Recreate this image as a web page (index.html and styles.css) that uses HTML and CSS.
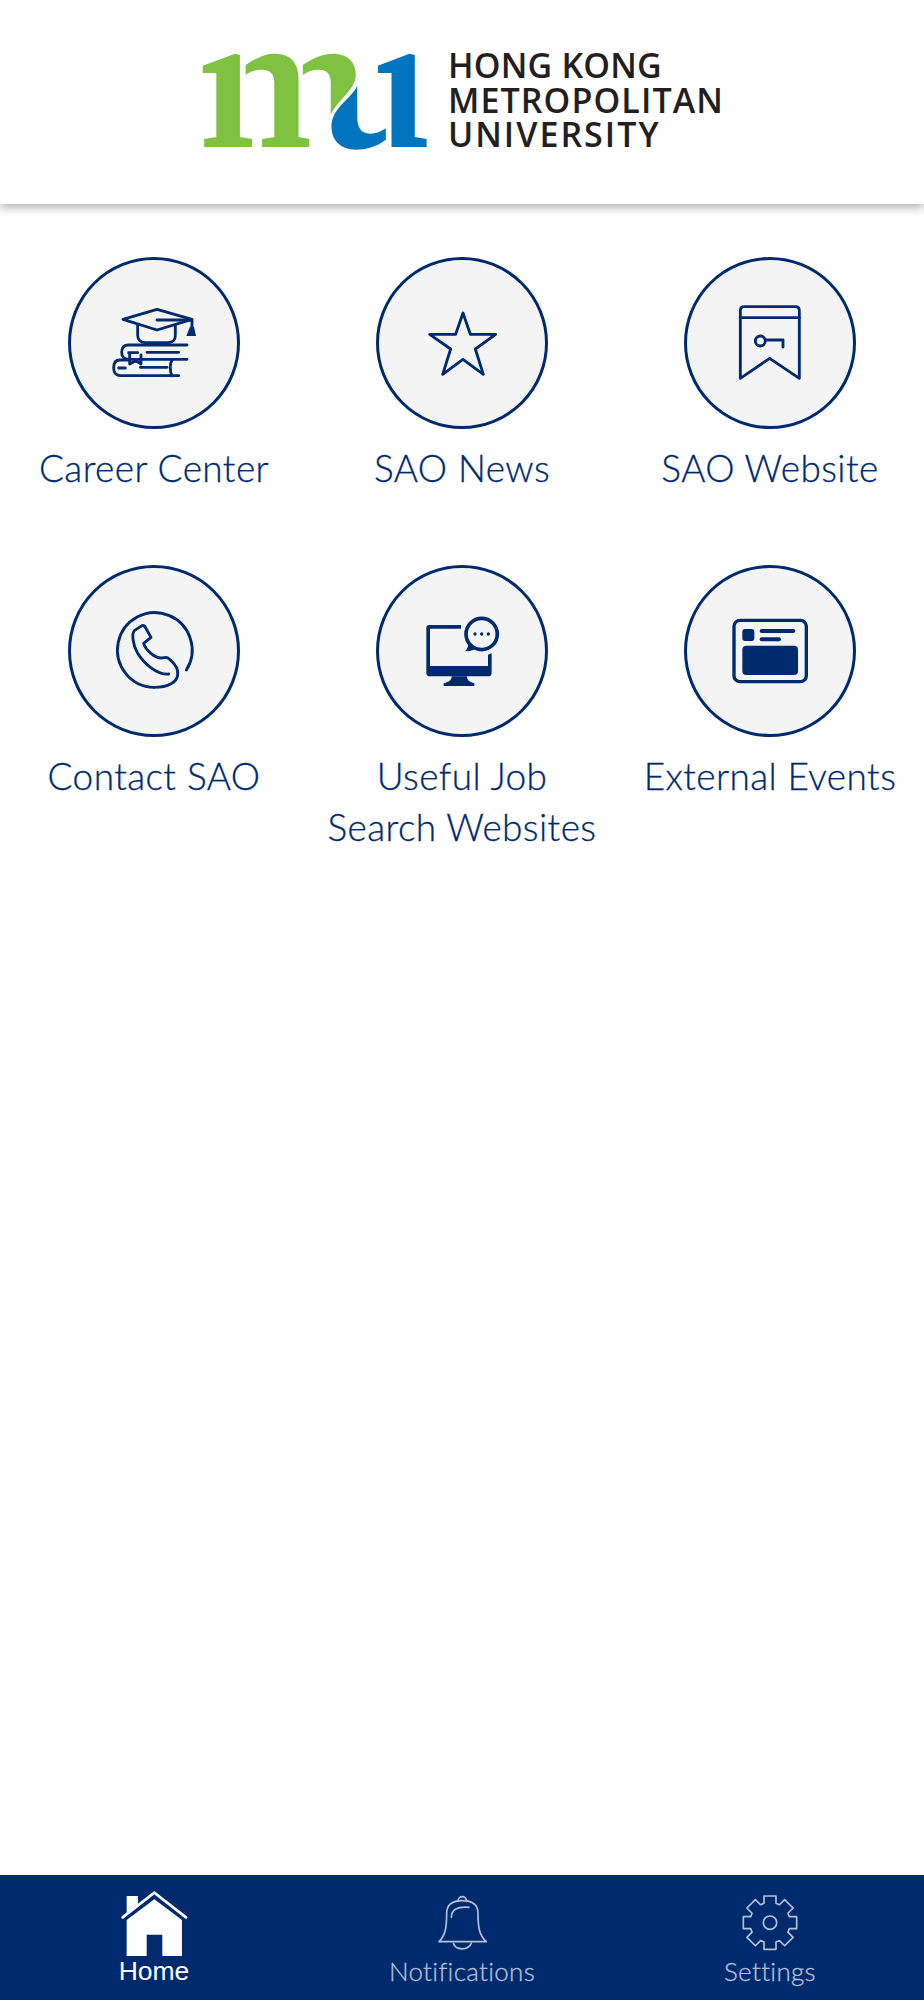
FILE: index.html
```html
<!DOCTYPE html>
<html lang="en">
<head>
<meta charset="utf-8">
<title>HKMU SAO</title>
<link rel="stylesheet" href="styles.css">
</head>
<body>
<div class="app">
  <header class="header">
    <div class="brand">
      <svg class="logo-mark" viewBox="60 70 632 294" preserveAspectRatio="none" aria-hidden="true">
        <g class="green">
          <path d="M62 108L152 72L166 76V322L200 328V352H66V328L100 322V130H62Z"/>
          <path d="M182 106C215 82 240 72 262 72C310 72 330 100 330 150V322L360 328V352H228V328L262 322V160C262 130 250 120 225 120C210 120 195 125 182 136Z"/>
          <path d="M342 106C375 82 400 72 425 72C470 72 490 100 490 135C490 180 440 210 420 255V160C420 130 408 120 385 120C370 120 355 125 342 136Z"/>
        </g>
        <g class="blue">
          <path d="M494 168V260C494 295 505 312 530 312C548 312 562 305 574 296V330C550 350 520 360 490 360C450 360 422 335 422 290C422 235 480 205 494 168Z"/>
          <path d="M552 108L640 72L655 76V322L688 328V352H590V130H552Z"/>
        </g>
      </svg>
      <div class="wordmark">
        <span class="word-hong">HONG KONG</span>
        <span class="word-metro">METROPOLITAN</span>
        <span class="word-uni">UNIVERSITY</span>
      </div>
    </div>
  </header>

  <main class="grid">
    <a class="tile">
      <span class="circle">
        <svg class="glyph" viewBox="56 54 513 513" aria-hidden="true">
          <path class="line" d="M218 238L320 208L425 238L320 270Z"/>
          <path class="line" d="M320 240H425V262"/>
          <path class="solid" d="M408 288L419 260H431L437 288Z"/>
          <path class="line" d="M262 256V285C262 300 272 308 285 308H355C368 308 375 298 375 285V256"/>
          <path class="line" d="M410 315H235C220 315 214 325 214 337C214 350 222 358 235 358H410"/>
          <path class="line" d="M290 337H385M235 338H262"/>
          <path class="line" d="M238 342V372L256 362L272 372V345"/>
          <path class="line" d="M235 360H208C194 360 190 373 190 384C190 398 198 407 210 407H385"/>
          <path class="line" d="M365 360C358 372 358 395 365 407M205 384H225M270 382H350"/>
        </svg>
      </span>
      <span class="tile-label">Career Center</span>
    </a>
    <a class="tile">
      <span class="circle">
        <svg class="glyph" viewBox="49 25 513 513" aria-hidden="true">
          <path class="line" d="M307 190L329 254H405L344 298L368 374L307 329L246 374L270 298L207 254H285Z"/>
        </svg>
      </span>
      <span class="tile-label">SAO News</span>
    </a>
    <a class="tile">
      <span class="circle">
        <svg class="glyph" viewBox="44 24 513 513" aria-hidden="true">
          <path class="line" d="M210 385V182Q210 170 222 170H375Q387 170 387 182V385L298 325Z"/>
          <path class="line" d="M210 203H387"/>
          <circle class="line" cx="270" cy="273" r="15"/>
          <path class="line" d="M285 270H338V291"/>
        </svg>
      </span>
      <span class="tile-label">SAO Website</span>
    </a>
    <a class="tile">
      <span class="circle">
        <svg class="glyph" viewBox="26 18 513 513" aria-hidden="true">
          <path class="line" d="M378 330A112 112 0 1 0 281 382"/>
          <path class="line" d="M325 342C290 345 250 310 232 280C215 250 215 220 222 212L245 197C252 195 255 200 258 207L272 232L250 250C255 268 285 300 310 293C318 290 322 292 328 298C345 312 355 325 352 345C350 365 325 382 281 382"/>
        </svg>
      </span>
      <span class="tile-label">Contact SAO</span>
    </a>
    <a class="tile">
      <span class="circle">
        <svg class="glyph" viewBox="48 18 513 513" aria-hidden="true">
          <path class="solid" d="M300 195H205Q196 195 196 205V338Q196 349 207 349H382Q392 349 392 338V280L381 284V318H207V206H300Z"/>
          <path class="solid" d="M272 349H318C318 360 325 366 340 370V378H248V370C265 366 272 360 272 349Z"/>
          <circle class="bubble" cx="362" cy="222" r="47"/>
          <path class="solid" d="M322 250C322 260 318 268 312 273C325 275 338 271 347 264Z"/>
          <circle class="solid" cx="342" cy="222" r="5"/>
          <circle class="solid" cx="362" cy="222" r="5"/>
          <circle class="solid" cx="382" cy="222" r="5"/>
        </svg>
      </span>
      <span class="tile-label">Useful Job<br>Search Websites</span>
    </a>
    <a class="tile">
      <span class="circle">
        <svg class="glyph" viewBox="44 18 513 513" aria-hidden="true">
          <rect class="frame" x="191" y="181" width="217" height="184" rx="18"/>
          <rect class="solid" x="216" y="207" width="36" height="36" rx="8"/>
          <rect class="solid" x="268" y="207" width="107" height="12" rx="6"/>
          <rect class="solid" x="268" y="232" width="64" height="12" rx="6"/>
          <rect class="solid" x="216" y="257" width="167" height="88" rx="12"/>
        </svg>
      </span>
      <span class="tile-label">External Events</span>
    </a>
  </main>

  <nav class="tabbar">
    <a class="tab tab-active">
      <svg class="tab-icon" viewBox="162 90 240 204" aria-hidden="true">
        <path class="home-fill" d="M200 108H234V132L200 160Z"/>
        <path class="home-fill" d="M283 118L366 180V288H307V224H260V288H200V180Z"/>
        <path class="home-roof" d="M188 172L283 98L378 172"/>
      </svg>
      <span class="tab-label tab-label-active">Home</span>
    </a>
    <a class="tab">
      <svg class="tab-icon" viewBox="184 90 240 204" aria-hidden="true">
        <path class="tab-line" d="M235 245C255 225 258 200 258 160C258 130 280 122 305 122C330 122 352 130 352 160C352 200 355 225 377 245Z"/>
        <path class="tab-line" d="M292 124C292 105 318 105 318 124"/>
        <path class="tab-line" d="M272 172C272 150 290 138 325 142"/>
        <path class="tab-line" d="M278 250C285 272 322 272 332 250"/>
      </svg>
      <span class="tab-label">Notifications</span>
    </a>
    <a class="tab">
      <svg class="tab-icon" viewBox="210 90 240 204" aria-hidden="true">
        <path class="tab-line" d="M312 130V108H348V130L358.3 134.3L373.9 118.7L399.3 144.1L383.7 159.7L388 170H410V206H388L383.7 216.3L399.3 231.9L373.9 257.3L358.3 241.7L348 246V268H312V246L301.7 241.7L286.1 257.3L260.7 231.9L276.3 216.3L272 206H250V170H272L276.3 159.7L260.7 144.1L286.1 118.7L301.7 134.3Z"/>
        <circle class="tab-line" cx="330" cy="188" r="20"/>
      </svg>
      <span class="tab-label">Settings</span>
    </a>
  </nav>
</div>
</body>
</html>
```

FILE: styles.css
```css
* {
  box-sizing: border-box;
}

html,
body {
  margin: 0;
  padding: 0;
  background: #fff;
}

.app {
  display: flex;
  flex-direction: column;
  width: 924px;
  height: 2000px;
  font-family: "Lato", "Liberation Sans", sans-serif;
}

.header {
  flex: none;
  display: flex;
  justify-content: center;
  height: 204px;
  padding-top: 53px;
  background: #fff;
  box-shadow: 0 3px 10px rgba(0, 0, 0, 0.35);
}

.brand {
  display: flex;
  align-items: flex-start;
  gap: 20px;
  height: 98px;
  padding-left: 2px;
}

.logo-mark {
  display: block;
  flex: none;
  width: 226px;
  height: 98px;
}

.green {
  fill: #7fc241;
}

.blue {
  fill: #0074bf;
}

.wordmark {
  display: flex;
  flex-direction: column;
  margin-top: -5px;
  font-family: "Open Sans", "Liberation Sans", sans-serif;
  font-size: 34px;
  font-weight: 600;
  line-height: 34.5px;
  color: #231f20;
}

.word-hong {
  letter-spacing: 0.2px;
}

.word-metro {
  letter-spacing: 1.1px;
}

.word-uni {
  letter-spacing: 2px;
}

.grid {
  flex: 1;
  display: grid;
  grid-template-columns: repeat(3, 308px);
  grid-auto-rows: 308px;
  padding-top: 53px;
}

.tile {
  display: flex;
  flex-direction: column;
  align-items: center;
  color: #002a6e;
}

.circle {
  display: flex;
  align-items: center;
  justify-content: center;
  flex: none;
  width: 172px;
  height: 172px;
  border: 3px solid #002a6e;
  border-radius: 50%;
  background: #f4f4f4;
}

.glyph {
  display: block;
  flex: none;
  width: 171px;
  height: 171px;
}

.line {
  fill: none;
  stroke: #002a6e;
  stroke-width: 8.5;
  stroke-linecap: round;
  stroke-linejoin: round;
}

.solid {
  fill: #002a6e;
}

.bubble {
  fill: none;
  stroke: #002a6e;
  stroke-width: 11;
}

.frame {
  fill: none;
  stroke: #002a6e;
  stroke-width: 10;
}

.tile-label {
  margin-top: 13px;
  font-size: 37px;
  font-weight: 300;
  line-height: 51px;
  letter-spacing: 0.4px;
  text-align: center;
  white-space: nowrap;
  -webkit-text-stroke: 0.3px #002a6e;
}

.tabbar {
  flex: none;
  display: grid;
  grid-template-columns: repeat(3, 308px);
  height: 125px;
  padding-top: 15px;
  background: #002a6e;
}

.tab {
  display: flex;
  flex-direction: column;
  align-items: center;
  color: #b4c1d8;
}

.tab-icon {
  display: block;
  flex: none;
  width: 80px;
  height: 68px;
}

.tab-label {
  font-size: 26px;
  font-weight: 300;
  line-height: 27px;
  letter-spacing: 0.3px;
  white-space: nowrap;
  -webkit-text-stroke: 0.3px #b4c1d8;
}

.tab-label-active {
  font-family: "Liberation Sans", sans-serif;
  font-size: 26.5px;
  font-weight: 400;
  letter-spacing: 0;
  color: #fff;
  -webkit-text-stroke: 0;
}

.home-fill {
  fill: #fff;
}

.home-roof {
  fill: none;
  stroke: #fff;
  stroke-width: 8;
  stroke-linecap: round;
}

.tab-line {
  fill: none;
  stroke: #b4c1d8;
  stroke-width: 5;
  stroke-linejoin: round;
  stroke-linecap: round;
}
```
